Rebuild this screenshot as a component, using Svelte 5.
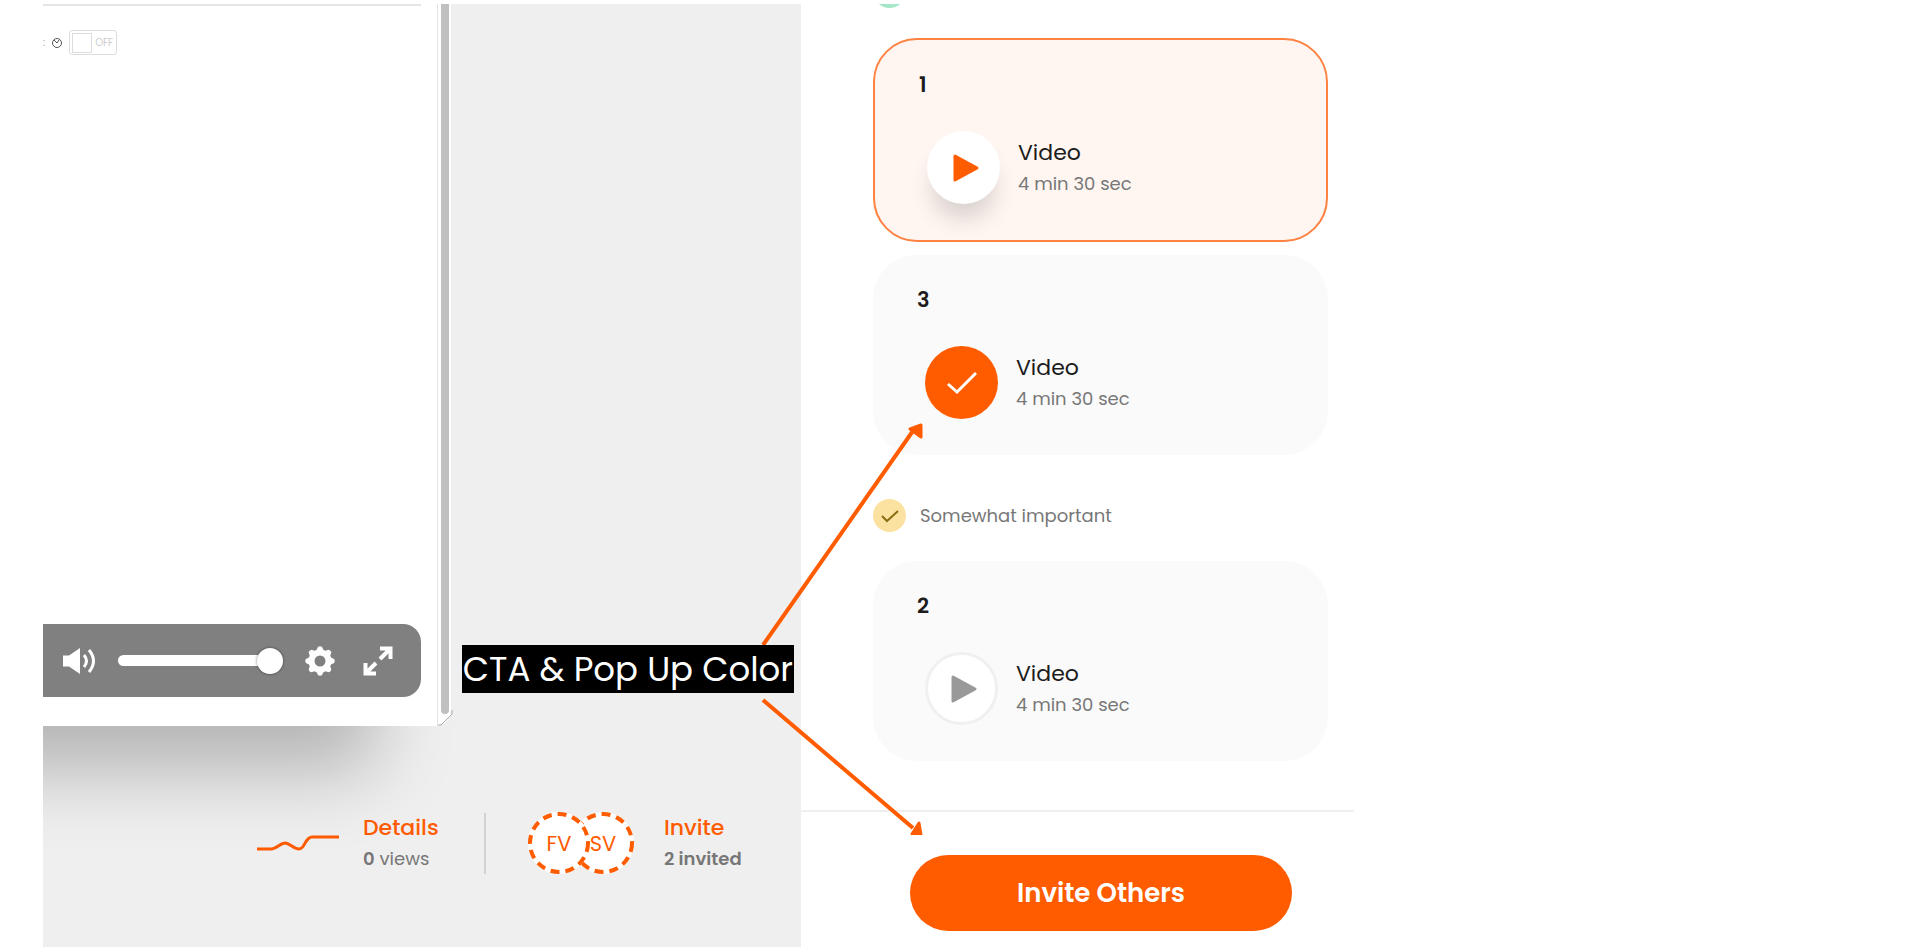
<script lang="ts">
  const videos = [
    { number: 1, title: "Video", duration: "4 min 30 sec", state: "active" },
    { number: 3, title: "Video", duration: "4 min 30 sec", state: "done" },
    { number: 2, title: "Video", duration: "4 min 30 sec", state: "idle" },
  ];

  let volume = $state(100);
  let autoplay = $state(false);
</script>

{#snippet card(video)}
  <article class="card {video.state}">
    <h3>{video.number}</h3>
    <div class="card_row">
      <button class="play" aria-label="Play video {video.number}">
        {#if video.state === "done"}
          <svg width="32" height="26" viewBox="0 0 32 26">
            <path d="M2 14 L11 22 L30 3" />
          </svg>
        {:else}
          <svg class="triangle" width="28" height="30" viewBox="0 0 28 30">
            <path d="M3 3 L25 15 L3 27 Z" />
          </svg>
        {/if}
      </button>
      <div>
        <div class="title">{video.title}</div>
        <div class="duration">{video.duration}</div>
      </div>
    </div>
  </article>
{/snippet}

<main>
  <section class="stage">
    <div class="window">
      <div class="screen">
        <div class="toolbar">
          <span>:</span>
          <svg width="12" height="12" viewBox="0 0 12 12">
            <circle cx="6" cy="6" r="4.5" />
            <path d="M3 3 L6 6 L8 3" />
          </svg>
          <label class="toggle">
            <input
              type="checkbox"
              aria-label="Autoplay"
              bind:checked={autoplay}
            />
            <span class="knob"></span>
            <span>{autoplay ? "ON" : "OFF"}</span>
          </label>
        </div>
        <div class="controls">
          <button aria-label="Mute">
            <svg width="34" height="28" viewBox="0 0 34 28">
              <path
                fill="#fff"
                d="M1 8.500 H7 L18 1 V27 L7 19.500 H1 Z"
              />
              <path
                fill="none"
                stroke="#fff"
                stroke-width="3"
                d="M22 8 Q27 14 22 20 M27 3 Q36 14 27 25"
              />
            </svg>
          </button>
          <input
            type="range"
            min="0"
            max="100"
            aria-label="Volume"
            bind:value={volume}
          />
          <button aria-label="Settings">
            <svg width="30" height="30" viewBox="-15 -15 30 30">
              <circle r="8.500" fill="none" stroke="#fff" stroke-width="6" />
              {#each [0, 45, 90, 135, 180, 225, 270, 315] as angle}
                <path
                  fill="#fff"
                  transform="rotate({angle})"
                  d="M-4.500 -9 L-2 -14 Q0 -15.500 2 -14 L4.500 -9 Z"
                />
              {/each}
            </svg>
          </button>
          <button aria-label="Full screen">
            <svg width="30" height="30" viewBox="0 0 30 30">
              <path
                fill="none"
                stroke="#fff"
                stroke-width="4"
                d="M17 2.500 H27.500 V13 M27 3 L17 13 M2.500 17 V27.500 H13 M3 27 L13 17"
              />
            </svg>
          </button>
        </div>
      </div>
      <div class="scrollbar"></div>
      <svg class="corner" width="16" height="18" viewBox="0 0 16 18">
        <path d="M1 17 H4 L15 6 V2" />
      </svg>
    </div>

    <footer>
      <svg class="trend" width="82" height="20" viewBox="0 0 82 20">
        <path
          d="M0 16 H14 C20 16 23 10 28 10 C33 10 36 16 42 16 C48 16 48 4 55 4 H82"
        />
      </svg>
      <div class="stat details">
        <a href="#details">Details</a>
        <div><b>0</b> views</div>
      </div>
      <div class="people">
        <span class="person">
          <svg width="62" height="62" viewBox="0 0 62 62">
            <circle class="disc" cx="31" cy="31" r="31" />
            <circle class="ring" cx="31" cy="31" r="29" />
          </svg>
          <span>FV</span>
        </span>
        <span class="person">
          <svg width="62" height="62" viewBox="0 0 62 62">
            <circle class="disc" cx="31" cy="31" r="31" />
            <circle class="ring" cx="31" cy="31" r="29" />
          </svg>
          <span>SV</span>
        </span>
      </div>
      <div class="stat invite">
        <a href="#invite">Invite</a>
        <div><b>2 invited</b></div>
      </div>
    </footer>
  </section>

  <section class="panel">
    <div class="list">
      <div class="status very"><span class="badge"></span></div>
      {@render card(videos[0])}
      {@render card(videos[1])}
      <div class="status somewhat">
        <span class="badge">
          <svg width="18" height="14" viewBox="0 0 18 14">
            <path d="M1 7 L6 12 L17 2" />
          </svg>
        </span>
        Somewhat important
      </div>
      {@render card(videos[2])}
    </div>
    <div class="action">
      <button>Invite Others</button>
    </div>

    <div class="note">
      <svg width="164" height="420" viewBox="0 0 164 420">
        <path class="line" d="M2 230 L154 13 M2 285 L152 413" />
        <path
          class="head"
          d="M160 10 L149 14 L160 22 Z M160 420 L151 419 L158 408 Z"
        />
      </svg>
      <span>CTA &amp; Pop Up Color</span>
    </div>
  </section>
</main>

<style>
  :global(body) {
    --orange: #ff5c00;
    --grey: #777;
    background: #fff;
    font-family: Poppins, Inter, "Open Sans", sans-serif;
    color: #1c1c1c;
  }

  main {
    display: grid;
    grid-template-columns: 758fr 553fr 565fr;
    min-height: 100vh;
    padding: 4px 0 4px 43px;
    box-sizing: border-box;
  }

  button {
    padding: 0;
    border: 0;
    background: none;
    font-family: inherit;
    cursor: pointer;
  }

  svg {
    display: block;
  }

  .stage {
    display: flex;
    flex-direction: column;
    overflow: hidden;
    background: #efefef;
  }

  .window {
    position: relative;
    flex: 1;
    display: flex;
    margin-right: 350px;
    background: #fff;
    border-bottom-right-radius: 16px;
    box-shadow: -76px 44px 76px rgba(0, 0, 0, 0.25);
  }

  .screen {
    flex: 1;
    display: flex;
    flex-direction: column;
    justify-content: space-between;
    padding: 0 16px 29px 0;
    border-right: 1px solid #e4e4e4;
  }

  .scrollbar {
    width: 8px;
    margin: 0 2px 12px 3px;
    background: #c0c0c0;
    border-radius: 0 0 4px 4px;
  }

  .corner {
    position: absolute;
    right: -2px;
    bottom: 0;
    fill: none;
    stroke: #aaa;
  }

  .toolbar {
    display: flex;
    align-items: center;
    gap: 6px;
    padding-top: 24px;
    border-top: 2px solid #e6e6e6;
    font-size: 10px;
    color: #aaa;
  }

  .toolbar svg {
    fill: none;
    stroke: #555;
  }

  .toggle {
    display: flex;
    align-items: center;
    gap: 3px;
    width: 46px;
    height: 23px;
    border: 1px solid #ddd;
    border-radius: 3px;
    color: #ccc;
  }

  .toggle input {
    position: absolute;
    opacity: 0;
  }

  .knob {
    width: 18px;
    height: 18px;
    margin-left: 2px;
    border: 1px solid #ddd;
  }

  .controls {
    display: flex;
    align-items: center;
    justify-content: flex-end;
    height: 73px;
    padding-right: 28px;
    background: #808080;
    border-radius: 0 18px 18px 0;
  }

  .controls input {
    appearance: none;
    width: 165px;
    height: 11px;
    margin: 0 22px;
    background: #fff;
    border-radius: 6px;
  }

  .controls input::-webkit-slider-thumb {
    appearance: none;
    width: 26px;
    height: 26px;
    background: #fff;
    border-radius: 50%;
    box-shadow: 0 0 3px rgba(0, 0, 0, 0.5);
  }

  .controls button:last-child {
    margin-left: 28px;
  }

  footer {
    display: flex;
    align-items: center;
    justify-content: flex-end;
    padding: 86px 58px 73px 0;
  }

  .trend {
    margin-right: 24px;
    fill: none;
    stroke: var(--orange);
    stroke-width: 3;
  }

  .stat {
    font-size: 18px;
    line-height: 30px;
    white-space: nowrap;
    color: var(--grey);
  }

  .stat b {
    font-weight: 600;
  }

  .stat a {
    font-size: 22px;
    font-weight: 500;
    color: var(--orange);
    text-decoration: none;
  }

  .details {
    width: 121px;
    border-right: 2px solid #d2d2d2;
  }

  .invite {
    width: 79px;
  }

  .people {
    display: flex;
    margin: 0 30px 0 42px;
  }

  .person {
    position: relative;
    display: grid;
    place-items: center;
    font-size: 21px;
    color: var(--orange);
  }

  .person > * {
    grid-area: 1 / 1;
  }

  .person:first-child {
    z-index: 1;
    margin-right: -18px;
  }

  .disc {
    fill: #fff;
  }

  .ring {
    fill: none;
    stroke: var(--orange);
    stroke-width: 4;
    stroke-dasharray: 9 6;
  }

  .panel {
    position: relative;
    display: flex;
    flex-direction: column;
  }

  .list {
    flex: 1;
    overflow: hidden;
    padding: 0 26px 48px 72px;
  }

  .status {
    display: flex;
    align-items: center;
    gap: 14px;
    font-size: 18px;
    line-height: 32px;
    color: var(--grey);
  }

  .badge {
    display: grid;
    place-items: center;
    width: 33px;
    height: 33px;
    border-radius: 50%;
  }

  .badge svg {
    fill: none;
    stroke: #8a6d14;
    stroke-width: 2;
  }

  .very {
    margin: -29px 0 30px;
  }

  .very .badge {
    background: #a5e8c8;
  }

  .somewhat {
    margin: 44px 0 29px;
  }

  .somewhat .badge {
    background: #fce2a0;
  }

  .card {
    padding: 30px 44px 36px;
    background: #fafafa;
    border-radius: 44px;
  }

  .card + .card {
    margin-top: 13px;
  }

  .card.active {
    border: 2px solid #ff8243;
    background: #fff6f2;
  }

  h3 {
    margin: 0 0 31px;
    font-size: 21px;
    font-weight: 600;
    line-height: 30px;
  }

  .card_row {
    display: flex;
    align-items: center;
    gap: 18px;
    padding-left: 8px;
  }

  .play {
    display: grid;
    place-items: center;
    box-sizing: border-box;
    width: 73px;
    height: 73px;
    border-radius: 50%;
    background: #fff;
  }

  .play svg {
    fill: none;
    stroke: #fff;
    stroke-width: 3;
  }

  .play .triangle {
    margin-left: 4px;
    fill: var(--orange);
    stroke: var(--orange);
    stroke-linejoin: round;
  }

  .active .play {
    box-shadow: 0 20px 24px -6px rgba(0, 0, 0, 0.16);
  }

  .done .play {
    background: var(--orange);
  }

  .idle .play {
    border: 3px solid #f0f0f0;
  }

  .idle .triangle {
    fill: #999;
    stroke: #999;
  }

  .title {
    font-size: 22px;
    line-height: 32px;
  }

  .duration {
    font-size: 18px;
    line-height: 30px;
    color: var(--grey);
  }

  .action {
    padding: 43px 62px 16px 109px;
    border-top: 2px solid #efefef;
  }

  .action button {
    width: 100%;
    height: 76px;
    border-radius: 38px;
    background: var(--orange);
    color: #fff;
    font-size: 26px;
    font-weight: 600;
  }

  /* callout with arrows, laid over the stage and the panel */
  .note {
    position: absolute;
    top: 411px;
    left: -40px;
    pointer-events: none;
  }

  .note .line {
    fill: none;
    stroke: var(--orange);
    stroke-width: 4;
  }

  .note .head {
    fill: var(--orange);
    stroke: var(--orange);
    stroke-width: 3;
    stroke-linejoin: round;
  }

  .note span {
    position: absolute;
    top: 230px;
    right: 131px;
    padding: 0 1px;
    background: #000;
    color: #fff;
    font-size: 34px;
    line-height: 48px;
    white-space: nowrap;
  }
</style>
